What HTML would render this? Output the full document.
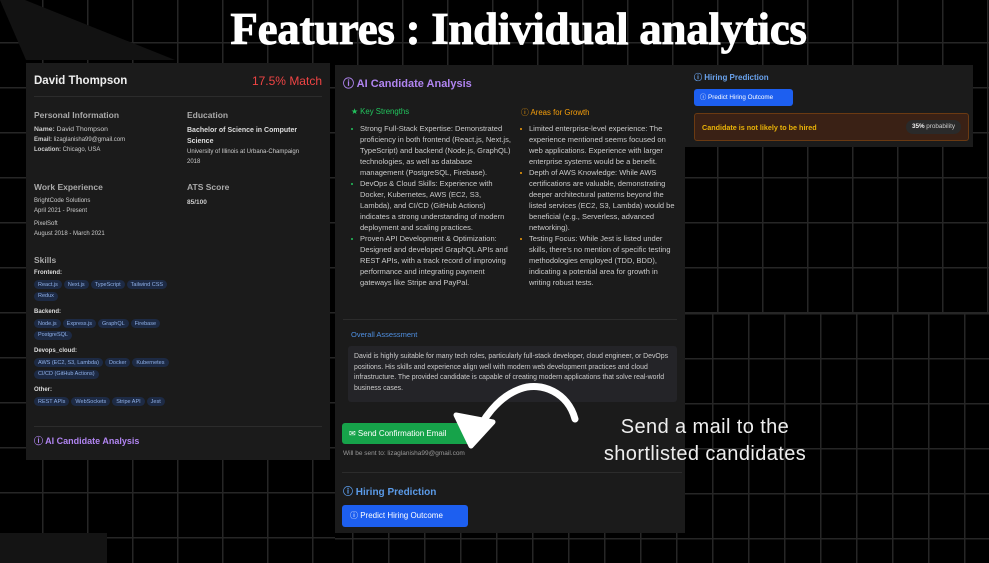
<!DOCTYPE html>
<html><head><style>
*{margin:0;padding:0;box-sizing:border-box}
body{width:989px;height:563px;overflow:hidden;background:#000;font-family:"Liberation Sans",sans-serif;position:relative;color:#ddd}
.grid{position:absolute;left:0;top:0;width:989px;height:563px;
background-image:linear-gradient(#262626 1.5px,transparent 1.5px),linear-gradient(90deg,#262626 1.5px,transparent 1.5px);
background-size:45px 45px;background-position:42px 42px}
.grid2{position:absolute;left:335px;top:313px;width:654px;height:250px;
background-image:linear-gradient(#262626 1.5px,transparent 1.5px),linear-gradient(90deg,#262626 1.5px,transparent 1.5px);
background-size:36px 45px;background-position:17px 0}
.p{position:absolute;background:#1b1b1b}
.abs{position:absolute}
h1{position:absolute;left:24px;width:989px;top:7px;line-height:1;text-align:center;font-family:"Liberation Serif",serif;font-weight:bold;font-size:45px;color:#fff;-webkit-text-stroke:0.8px #fff;letter-spacing:-0.3px}
.lab{font-size:8.5px;color:#aaa;font-weight:bold}
.t6{font-size:6px;color:#ccc;line-height:9.5px}
.tags{line-height:0;height:auto}
.tag{display:inline-block;background:#1d2a44;color:#8fb0e8;font-size:5.5px;line-height:8px;height:9px;padding:0.5px 4px;border-radius:5px;margin:0 2px 2.5px 0;vertical-align:top}
.sk{font-size:6px;line-height:8px;font-weight:bold;color:#ddd;margin:5px 0 3px}
ul{list-style:none}
li{position:relative;padding-left:11px;font-size:7.5px;line-height:11px;color:#ccc}
li:before{content:"";position:absolute;left:2px;top:4.5px;width:2px;height:2px;border-radius:50%}
.g li:before{background:#22c55e}.o li:before{background:#f59e0b}
</style></head><body>
<div class="grid"></div>
<div class="grid2" style="background-color:#000"></div>
<svg class="abs" style="left:0;top:0" width="330" height="70"><polygon points="0,0 25,0 175,60 26,60" fill="#121212"/></svg>
<div class="abs" style="left:0;top:533px;width:107px;height:30px;background:#141414"></div>
<h1>Features : Individual analytics</h1>

<!-- left panel -->
<div class="p" style="left:26px;top:63px;width:304px;height:397px">
 <div class="abs" style="left:8px;top:12px;font-size:11.5px;font-weight:bold;color:#eee">David Thompson</div>
 <div class="abs" style="right:8px;top:11px;font-size:12px;color:#ef4444">17.5% Match</div>
 <div class="abs" style="left:8px;top:33px;width:288px;height:1px;background:#2c2c2c"></div>
 <div class="abs lab" style="left:8px;top:47px">Personal Information</div>
 <div class="abs t6" style="left:8px;top:62px;font-size:6.8px"><b>Name:</b> David Thompson<br><span style="font-size:6px"><b>Email:</b> lizaglanisha99@gmail.com<br><b>Location:</b> Chicago, USA</span></div>
 <div class="abs lab" style="left:161px;top:47px">Education</div>
 <div class="abs" style="left:161px;top:62px;font-size:7px;font-weight:bold;color:#ddd;line-height:11px">Bachelor of Science in Computer<br>Science</div>
 <div class="abs t6" style="left:161px;top:85px">University of Illinois at Urbana-Champaign<br>2018</div>
 <div class="abs lab" style="left:8px;top:119px">Work Experience</div>
 <div class="abs t6" style="left:8px;top:134px">BrightCode Solutions<br>April 2021 - Present</div>
 <div class="abs t6" style="left:8px;top:157px">PixelSoft<br>August 2018 - March 2021</div>
 <div class="abs lab" style="left:161px;top:119px">ATS Score</div>
 <div class="abs" style="left:161px;top:136px;font-size:6.5px;font-weight:bold;color:#ccc">85/100</div>
 <div class="abs lab" style="left:8px;top:192px">Skills</div>
 <div class="abs" style="left:8px;top:201px;width:190px">
  <div class="sk">Frontend:</div><div class="tags"><span class="tag">React.js</span><span class="tag">Next.js</span><span class="tag">TypeScript</span><span class="tag">Tailwind CSS</span><br><span class="tag">Redux</span></div>
  <div class="sk">Backend:</div><div class="tags"><span class="tag">Node.js</span><span class="tag">Express.js</span><span class="tag">GraphQL</span><span class="tag">Firebase</span><br><span class="tag">PostgreSQL</span></div>
  <div class="sk">Devops_cloud:</div><div class="tags"><span class="tag">AWS (EC2, S3, Lambda)</span><span class="tag">Docker</span><span class="tag">Kubernetes</span><br><span class="tag">CI/CD (GitHub Actions)</span></div>
  <div class="sk">Other:</div><div class="tags"><span class="tag">REST APIs</span><span class="tag">WebSockets</span><span class="tag">Stripe API</span><span class="tag">Jest</span></div>
 </div>
 <div class="abs" style="left:8px;top:363px;width:288px;height:1px;background:#2c2c2c"></div>
 <div class="abs" style="left:8px;top:371px;font-size:9px;font-weight:bold;color:#b084f0">&#9432; AI Candidate Analysis</div>
</div>

<!-- middle -->
<div class="p" style="left:335px;top:65px;width:350px;height:468px">
 <div class="abs" style="left:8px;top:10px;font-size:11px;font-weight:bold;color:#b084f0">&#9432; AI Candidate Analysis</div>
 <div class="abs" style="left:16px;top:42px;font-size:7.8px;color:#22c55e">&#9733; Key Strengths</div>
 <div class="abs" style="left:186px;top:42px;font-size:7.8px;color:#f59e0b">&#9432; Areas for Growth</div>
 <ul class="abs g" style="left:14px;top:58px;width:162px">
  <li>Strong Full-Stack Expertise: Demonstrated proficiency in both frontend (React.js, Next.js, TypeScript) and backend (Node.js, GraphQL) technologies, as well as database management (PostgreSQL, Firebase).</li>
  <li>DevOps &amp; Cloud Skills: Experience with Docker, Kubernetes, AWS (EC2, S3, Lambda), and CI/CD (GitHub Actions) indicates a strong understanding of modern deployment and scaling practices.</li>
  <li>Proven API Development &amp; Optimization: Designed and developed GraphQL APIs and REST APIs, with a track record of improving performance and integrating payment gateways like Stripe and PayPal.</li>
 </ul>
 <ul class="abs o" style="left:183px;top:58px;width:163px">
  <li>Limited enterprise-level experience: The experience mentioned seems focused on web applications. Experience with larger enterprise systems would be a benefit.</li>
  <li>Depth of AWS Knowledge: While AWS certifications are valuable, demonstrating deeper architectural patterns beyond the listed services (EC2, S3, Lambda) would be beneficial (e.g., Serverless, advanced networking).</li>
  <li>Testing Focus: While Jest is listed under skills, there's no mention of specific testing methodologies employed (TDD, BDD), indicating a potential area for growth in writing robust tests.</li>
 </ul>
 <div class="abs" style="left:8px;top:254px;width:334px;height:1px;background:#2c2c2c"></div>
 <div class="abs" style="left:16px;top:265px;font-size:7.5px;color:#4f8fe0">Overall Assessment</div>
 <div class="abs" style="left:13px;top:281px;width:329px;height:56px;background:#242428;border-radius:3px;padding:6px 6px;font-size:6.9px;line-height:10.7px;color:#ccc">David is highly suitable for many tech roles, particularly full-stack developer, cloud engineer, or DevOps positions. His skills and experience align well with modern web development practices and cloud infrastructure. The provided candidate is capable of creating modern applications that solve real-world business cases.</div>
 <div class="abs" style="left:7px;top:358px;width:131px;height:21px;background:#16a34a;border-radius:3px;color:#fff;font-size:8px;line-height:21px;padding-left:7px">&#9993; Send Confirmation Email</div>
 <div class="abs" style="left:8px;top:385px;font-size:6.5px;color:#999">Will be sent to: lizaglanisha99@gmail.com</div>
 <div class="abs" style="left:7px;top:407px;width:340px;height:1px;background:#2c2c2c"></div>
 <div class="abs" style="left:8px;top:418px;font-size:10px;font-weight:bold;color:#5b9be8">&#9432; Hiring Prediction</div>
 <div class="abs" style="left:7px;top:440px;width:126px;height:22px;background:#1d5ff0;border-radius:3px;color:#fff;font-size:8px;line-height:22px;padding-left:8px">&#9432; Predict Hiring Outcome</div>
</div>

<!-- right -->
<div class="p" style="left:685px;top:65px;width:288px;height:82px">
 <div class="abs" style="left:9px;top:7px;font-size:8px;font-weight:bold;color:#6aa3ee">&#9432; Hiring Prediction</div>
 <div class="abs" style="left:9px;top:24px;width:99px;height:17px;background:#1d5ff0;border-radius:3px;color:#fff;font-size:6.3px;line-height:17px;padding-left:6px">&#9432; Predict Hiring Outcome</div>
 <div class="abs" style="left:9px;top:48px;width:275px;height:28px;background:#3a2115;border:1px solid #6b3a12;border-radius:3px">
  <div class="abs" style="left:7px;top:9px;font-size:7.2px;font-weight:bold;color:#eab308">Candidate is not likely to be hired</div>
  <div class="abs" style="right:7px;top:6px;height:14px;padding:0 6px;border-radius:7px;background:#2a2a2a;font-size:6.3px;line-height:14px;color:#ccc"><b style="color:#eee">35%</b> probability</div>
 </div>
</div>

<svg class="abs" style="left:440px;top:375px" width="160" height="90" viewBox="0 0 160 90">
 <path d="M135,44 C128,18 102,6 80,14 C58,22 42,44 33,66" fill="none" stroke="#fff" stroke-width="7" stroke-linecap="round"/>
 <path d="M16,40 L31,71 L53,47 Z" fill="#fff" stroke="#fff" stroke-width="5" stroke-linejoin="round"/>
</svg>
<div class="abs" style="left:590px;top:414px;width:230px;text-align:center;font-size:20px;line-height:27px;color:#eee;letter-spacing:0.4px">Send a mail to the<br>shortlisted candidates</div>
</body></html>
